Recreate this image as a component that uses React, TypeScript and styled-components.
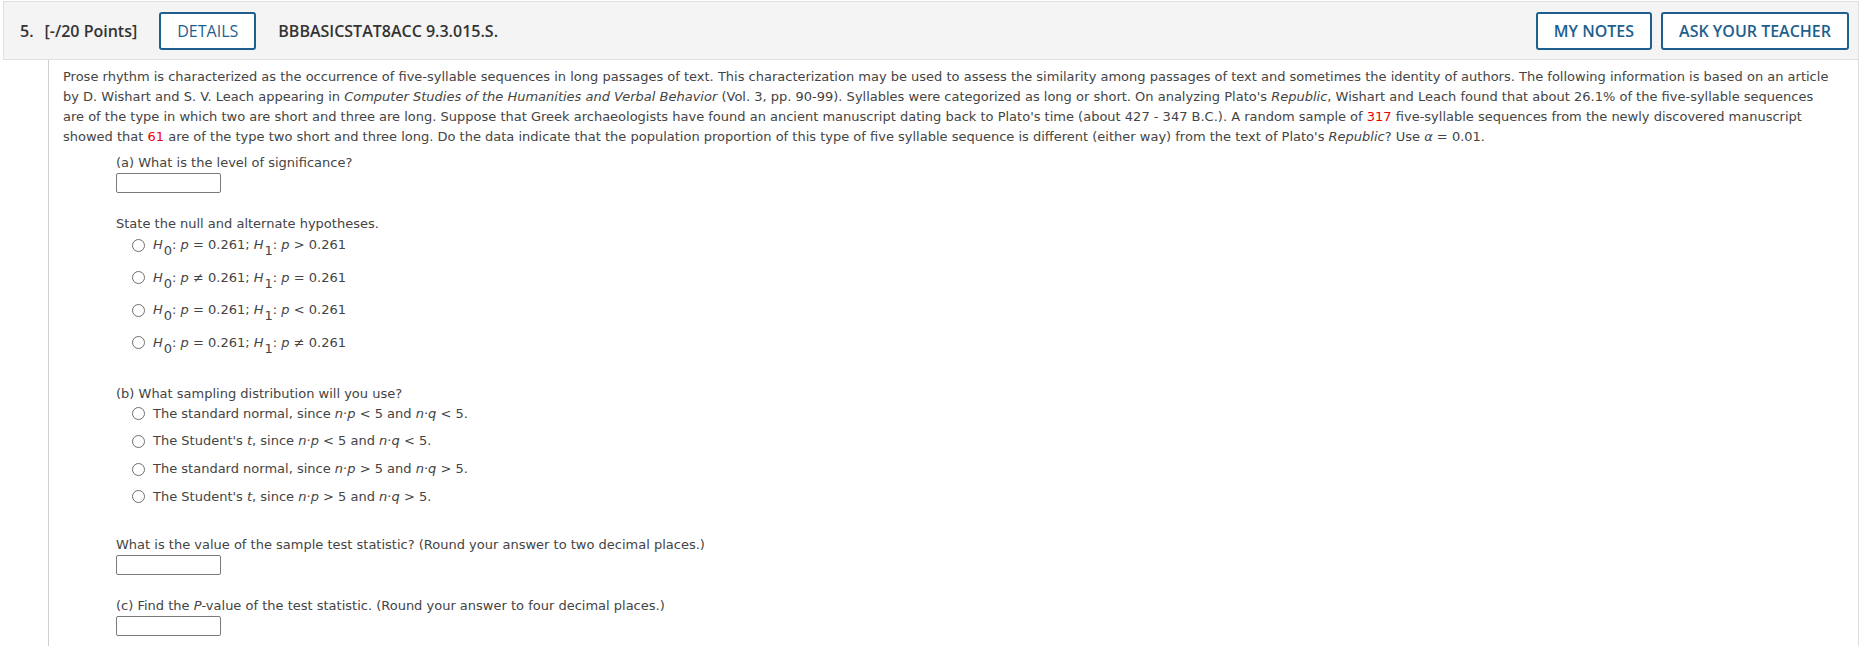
import React from "react";
import styled, { createGlobalStyle } from "styled-components";

const GlobalStyle = createGlobalStyle`
  html, body {
    margin: 0;
    padding: 0;
    background: #ffffff;
  }
`;

const Page = styled.div`
  padding: 1px 10px 0 3px;
  font-family: Verdana, "DejaVu Sans", sans-serif;
`;

const Header = styled.div`
  display: flex;
  align-items: center;
  height: 57px;
  padding: 0 9px 0 16px;
  background: #f4f4f4;
  border: 1px solid #e0e0e0;
  font-family: "Open Sans", "Liberation Sans", sans-serif;
  font-weight: 600;
  font-size: 16px;
  color: #333333;
`;

const Number = styled.span`
  margin-right: 11px;
`;

const Points = styled.span`
  margin-right: 22px;
`;

const Code = styled.span`
  margin-left: 22px;
`;

const Spacer = styled.div`
  flex: 1;
`;

const OutlineButton = styled.button<{ $light?: boolean; $gap?: boolean }>`
  height: 38px;
  padding: 0 16px;
  margin-left: ${(p) => (p.$gap ? "9px" : "0")};
  background: #ffffff;
  border: 2px solid #1e5f8d;
  border-radius: 3px;
  color: #1e5f8d;
  font-family: "Open Sans", "Liberation Sans", sans-serif;
  font-weight: ${(p) => (p.$light ? 400 : 600)};
  font-size: 16px;
  cursor: pointer;
`;

const Body = styled.div`
  margin-left: 45px;
  border-left: 1px solid #cfcfcf;
  border-right: 1px solid #dddddd;
  padding: 7px 20px 30px 14px;
  font-size: 13px;
  line-height: 20px;
  color: #444444;
`;

const Text = styled.p`
  margin: 0;
`;

const Red = styled.span`
  color: #ee0000;
`;

const Question = styled.div`
  margin-left: 53px;
  margin-top: 6px;
`;

const Prompt = styled.div<{ $top?: number }>`
  margin-top: ${(p) => p.$top ?? 0}px;
`;

const AnswerBox = styled.input`
  display: block;
  box-sizing: border-box;
  width: 105px;
  height: 20px;
  margin: 0;
  border: 1px solid #7a7a7a;
  border-radius: 2px;
  background: #ffffff;
`;

const Options = styled.div<{ $gap: number; $top: number }>`
  display: flex;
  flex-direction: column;
  gap: ${(p) => p.$gap}px;
  margin-top: ${(p) => p.$top}px;
`;

const Option = styled.label`
  display: flex;
  align-items: center;
  height: 20px;
  padding-left: 16px;
  cursor: pointer;
`;

const Radio = styled.span`
  box-sizing: border-box;
  flex: none;
  width: 13px;
  height: 13px;
  margin-right: 8px;
  border: 1px solid #6e6e6e;
  border-radius: 50%;
  background: #ffffff;
`;

const Var = styled.i`
  font-style: italic;
`;

const Sub = styled.span`
  position: relative;
  top: 6px;
  font-size: 13px;
  margin-left: 1px;
`;

const H = ({ n }: { n: number }) => (
  <>
    <Var>H</Var>
    <Sub>{n}</Sub>
  </>
);

const hypotheses = [
  ["=", ">"],
  ["≠", "="],
  ["=", "<"],
  ["=", "≠"],
];

const distributions = [
  ["The standard normal", "<"],
  ["The Student's t", "<"],
  ["The standard normal", ">"],
  ["The Student's t", ">"],
];

const DistLabel = ({ name }: { name: string }) =>
  name === "The Student's t" ? (
    <>
      The Student's <Var>t</Var>
    </>
  ) : (
    <>{name}</>
  );

export default function App() {
  return (
    <Page>
      <GlobalStyle />
      <Header>
        <Number>5.</Number>
        <Points>[-/20 Points]</Points>
        <OutlineButton $light>DETAILS</OutlineButton>
        <Code>BBBASICSTAT8ACC 9.3.015.S.</Code>
        <Spacer />
        <OutlineButton>MY NOTES</OutlineButton>
        <OutlineButton $gap>ASK YOUR TEACHER</OutlineButton>
      </Header>
      <Body>
        <Text>
          Prose rhythm is characterized as the occurrence of five-syllable sequences in long passages of
          text. This characterization may be used to assess the similarity among passages of text and
          sometimes the identity of authors. The following information is based on an article by D.
          Wishart and S. V. Leach appearing in <i>Computer Studies of the Humanities and Verbal Behavior</i>{" "}
          (Vol. 3, pp. 90-99). Syllables were categorized as long or short. On analyzing Plato's{" "}
          <i>Republic</i>, Wishart and Leach found that about 26.1% of the five-syllable sequences are of
          the type in which two are short and three are long. Suppose that Greek archaeologists have found
          an ancient manuscript dating back to Plato's time (about 427 - 347 B.C.). A random sample of{" "}
          <Red>317</Red> five-syllable sequences from the newly discovered manuscript showed that{" "}
          <Red>61</Red> are of the type two short and three long. Do the data indicate that the population
          proportion of this type of five syllable sequence is different (either way) from the text of
          Plato's <i>Republic</i>? Use <Var>α</Var> = 0.01.
        </Text>
        <Question>
          <Prompt>(a) What is the level of significance?</Prompt>
          <AnswerBox type="text" />
          <Prompt $top={21}>State the null and alternate hypotheses.</Prompt>
          <Options $gap={12.6} $top={1}>
            {hypotheses.map(([a, b], i) => (
              <Option key={"hyp_" + i}>
                <Radio />
                <span>
                  <H n={0} />: <Var>p</Var> {a} 0.261; <H n={1} />: <Var>p</Var> {b} 0.261
                </span>
              </Option>
            ))}
          </Options>
          <Prompt $top={31}>(b) What sampling distribution will you use?</Prompt>
          <Options $gap={7.7} $top={0}>
            {distributions.map(([name, op], i) => (
              <Option key={"dist_" + i}>
                <Radio />
                <span>
                  <DistLabel name={name} />, since <Var>n</Var>·<Var>p</Var> {op} 5 and <Var>n</Var>·
                  <Var>q</Var> {op} 5.
                </span>
              </Option>
            ))}
          </Options>
          <Prompt $top={28}>
            What is the value of the sample test statistic? (Round your answer to two decimal places.)
          </Prompt>
          <AnswerBox type="text" />
          <Prompt $top={21}>
            (c) Find the <Var>P</Var>-value of the test statistic. (Round your answer to four decimal places.)
          </Prompt>
          <AnswerBox type="text" />
        </Question>
      </Body>
    </Page>
  );
}
